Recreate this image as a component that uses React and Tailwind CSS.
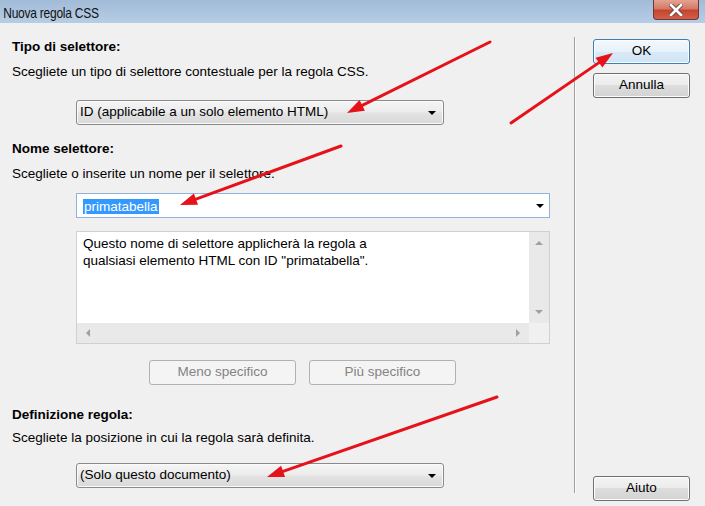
const font = { fontFamily: '"Liberation Sans", Arial, sans-serif' };

const Caret = () => (
  <span className="inline-block w-0 h-0 border-x-[4px] border-x-transparent border-t-[4px] border-t-black" />
);

const Combo = ({ text, className = '' }) => (
  <div
    className={
      'flex items-center h-[25px] rounded-[3px] border border-[#8a8a8a] bg-[linear-gradient(to_bottom,#f5f5f5_0%,#ececec_45%,#e2e2e2_55%,#d9d9d9_100%)] pl-[3px] pr-[7px] shadow-[inset_0_0_0_1px_#fafafa] ' +
      className
    }
  >
    <span className="flex-1 text-[13.5px] text-black">{text}</span>
    <Caret />
  </div>
);

const Button = ({ children, primary, className = '' }) => (
  <div
    className={
      'flex items-center justify-center w-[97px] h-[25px] rounded-[3px] border text-[13.5px] text-black shadow-[inset_0_0_0_1px_#fcfcfc] ' +
      (primary
        ? 'border-[#3c7fb1] bg-[linear-gradient(to_bottom,#f3f9fd_0%,#e6f1fa_50%,#d9e9f6_50%,#d1e4f4_100%)] '
        : 'border-[#707070] bg-[linear-gradient(to_bottom,#f4f4f4_0%,#ebebeb_50%,#dddddd_50%,#d3d3d3_100%)] ') +
      className
    }
  >
    {children}
  </div>
);

const DisabledButton = ({ children }) => (
  <div className="flex items-center justify-center w-[147px] h-[25px] rounded-[3px] border border-[#adb2b5] bg-[#f4f4f4] text-[13.5px] text-[#838383]">
    {children}
  </div>
);

// red annotation arrow, tail -> tip
const Arrow = ({ x1, y1, x2, y2 }) => {
  const dx = x2 - x1;
  const dy = y2 - y1;
  const len = Math.hypot(dx, dy);
  const ux = dx / len;
  const uy = dy / len;
  const hl = 17;
  const hw = 6;
  const bx = x2 - ux * hl;
  const by = y2 - uy * hl;
  const pts = `${x2},${y2} ${bx - uy * hw},${by + ux * hw} ${bx + uy * hw},${by - ux * hw}`;
  return (
    <g>
      <line x1={x1} y1={y1} x2={bx} y2={by} stroke="#e6121a" strokeWidth="3" strokeLinecap="round" />
      <polygon points={pts} fill="#e6121a" />
    </g>
  );
};

const App = () => {
  return (
    <div className="relative w-[705px] h-[506px] overflow-hidden bg-[#f0f0f0] text-black" style={font}>
      {/* Title bar */}
      <div className="flex items-start h-[23px] bg-[linear-gradient(to_bottom,#a1bbd7,#b7cde6)]">
        <span className="inline-block pl-[4px] pt-[2px] text-[15px] tracking-[-0.3px] text-[#111] origin-left scale-x-[0.8]">
          Nuova regola CSS
        </span>
        <div className="ml-auto mr-[6px] flex items-center justify-center w-[46px] h-[20px] rounded-b-[4px] border border-t-0 border-[#6b3b33] bg-[linear-gradient(to_bottom,#e3a393_0%,#d57a66_45%,#c7442f_55%,#d0604a_100%)]">
          <svg width="14" height="12" viewBox="0 0 14 12">
            <path d="M2 1 L12 11 M12 1 L2 11" stroke="#6b4a45" strokeWidth="4.5" strokeLinecap="square" />
            <path d="M2 1 L12 11 M12 1 L2 11" stroke="#fff" strokeWidth="2.6" strokeLinecap="square" />
          </svg>
        </div>
      </div>

      <div className="flex h-[483px]">
        {/* Left column */}
        <div className="w-[574px] pl-[12px] flex flex-col">
          <div className="mt-[16px] h-[16px] leading-[16px] text-[13.5px] font-bold">Tipo di selettore:</div>
          <div className="mt-[9px] h-[16px] leading-[16px] text-[13.5px]">
            Scegliete un tipo di selettore contestuale per la regola CSS.
          </div>
          <Combo className="mt-[20px] ml-[64px] w-[368px]" text="ID (applicabile a un solo elemento HTML)" />

          <div className="mt-[16px] h-[16px] leading-[16px] text-[13.5px] font-bold">Nome selettore:</div>
          <div className="mt-[9px] h-[16px] leading-[16px] text-[13.5px]">
            Scegliete o inserite un nome per il selettore.
          </div>
          <div className="mt-[11px] ml-[64px] w-[474px] h-[25px] flex items-center border border-[#8fb3dc] bg-white pl-[6px] pr-[5px]">
            <span className="flex-1">
              <span className="bg-[#3399ff] text-white text-[13.5px] leading-[16px] px-[1px]">primatabella</span>
            </span>
            <Caret />
          </div>

          {/* Description box */}
          <div className="mt-[13px] ml-[64px] w-[474px] h-[113px] border border-[#d0d0d0] bg-[#f0f0f0] flex flex-col">
            <div className="flex flex-1">
              <div className="flex-1 bg-white pl-[6px] pt-[3px] text-[13.5px] leading-[17px]">
                Questo nome di selettore applicherà la regola a
                <br />
                qualsiasi elemento HTML con ID "primatabella".
              </div>
              <div className="w-[20px] bg-[#e9e9e9] flex flex-col items-center justify-between py-[9px]">
                <span className="w-0 h-0 border-x-[4px] border-x-transparent border-b-[4px] border-b-[#a0a0a0]" />
                <span className="w-0 h-0 border-x-[4px] border-x-transparent border-t-[4px] border-t-[#a0a0a0]" />
              </div>
            </div>
            <div className="flex h-[20px]">
              <div className="flex-1 flex items-center justify-between px-[9px] bg-[#e9e9e9]">
                <span className="w-0 h-0 border-y-[4px] border-y-transparent border-r-[4px] border-r-[#a0a0a0]" />
                <span className="w-0 h-0 border-y-[4px] border-y-transparent border-l-[4px] border-l-[#a0a0a0]" />
              </div>
              <div className="w-[20px] bg-[#f0f0f0]" />
            </div>
          </div>

          <div className="mt-[16px] ml-[137px] flex gap-[13px]">
            <DisabledButton>Meno specifico</DisabledButton>
            <DisabledButton>Più specifico</DisabledButton>
          </div>

          <div className="mt-[22px] h-[16px] leading-[16px] text-[13.5px] font-bold">Definizione regola:</div>
          <div className="mt-[7px] h-[16px] leading-[16px] text-[13.5px]">
            Scegliete la posizione in cui la regola sarà definita.
          </div>
          <Combo className="mt-[17px] ml-[64px] w-[368px]" text="(Solo questo documento)" />
        </div>

        {/* Separator */}
        <div className="mt-[14px] mb-[13px] w-[2px] border-l border-[#a0a0a0] bg-white/70" />

        {/* Right column */}
        <div className="flex-1 pl-[17px] pt-[16px] pb-[5px] flex flex-col">
          <Button primary>OK</Button>
          <Button className="mt-[9px]">Annulla</Button>
          <Button className="mt-auto">Aiuto</Button>
        </div>
      </div>

      {/* Annotation arrows */}
      <svg className="absolute inset-0 pointer-events-none" width="705" height="506">
        <Arrow x1={490} y1={42} x2={347} y2={113} />
        <Arrow x1={511} y1={123} x2={613} y2={53} />
        <Arrow x1={341} y1={146} x2={180} y2={205} />
        <Arrow x1={497} y1={397} x2={267} y2={477} />
      </svg>
    </div>
  );
};

export default App;
